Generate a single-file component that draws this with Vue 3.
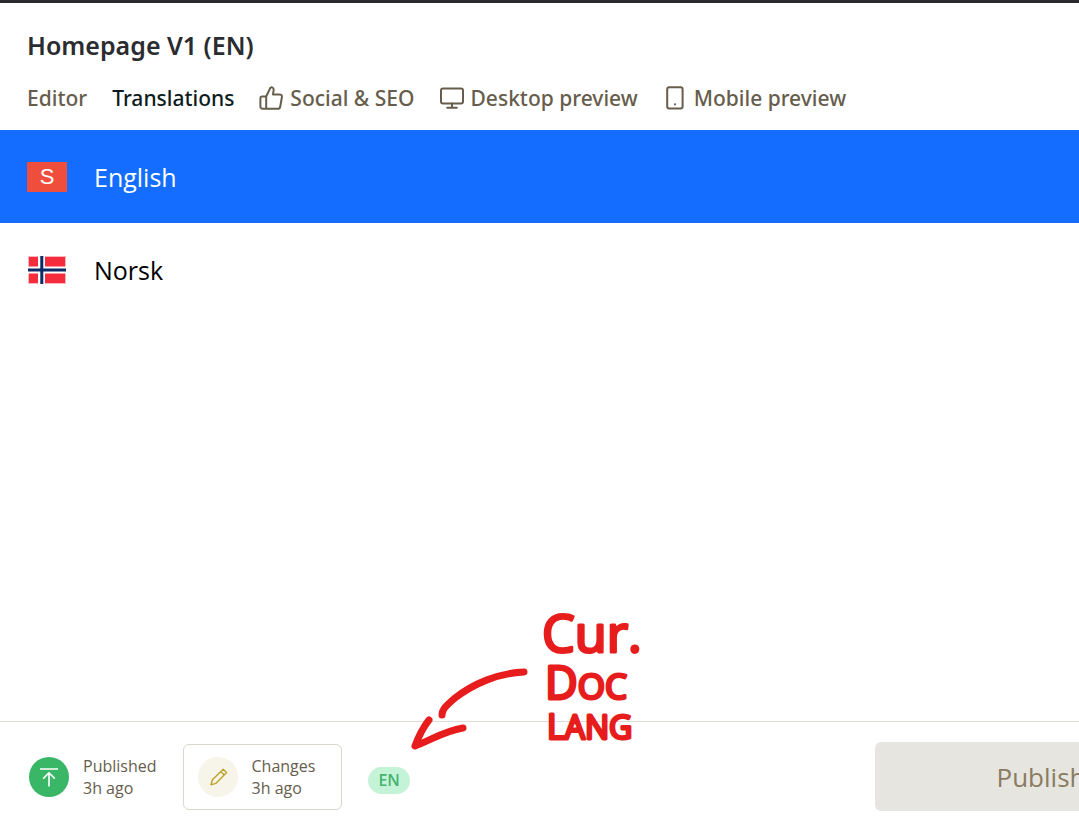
<script setup>
import { ref } from 'vue'

const activeTab = ref('translations')
const activeLanguage = ref('en')

const tabs = [
  { id: 'editor', label: 'Editor' },
  { id: 'translations', label: 'Translations' },
  { id: 'seo', label: 'Social & SEO', icon: 'thumb' },
  { id: 'desktop', label: 'Desktop preview', icon: 'desktop' },
  { id: 'mobile', label: 'Mobile preview', icon: 'mobile' },
]
</script>

<template>
  <div class="pane">
    <header class="head">
      <h1 class="title">Homepage V1 (EN)</h1>
      <nav class="tabs">
        <button
          v-for="tab in tabs"
          :key="tab.id"
          type="button"
          class="tab"
          :class="[tab.icon, { active: activeTab === tab.id }]"
          @click="activeTab = tab.id"
        >
          <svg v-if="tab.icon === 'thumb'" class="tab-icon" viewBox="0 0 24 24" aria-hidden="true">
            <path d="M7.2 10.5V22.6M2.8 10.5H7.2L10.5 3.6C10.8 1.9 12 1 13.2 1.4C14.4 1.8 14.8 3 14.6 4.4L14 8.4H20.6C22.2 8.4 23.2 9.7 22.9 11.2L21.2 20.7C21 21.9 20 22.7 18.8 22.7H3.6C2.3 22.7 1.4 21.8 1.4 20.6V12C1.4 11.2 1.9 10.5 2.8 10.5Z" />
          </svg>
          <svg v-else-if="tab.icon === 'desktop'" class="tab-icon" viewBox="0 0 24 24" aria-hidden="true">
            <rect x="1" y="2.5" width="22" height="15" rx="2" />
            <path d="M12 17.5V21.5M7.2 21.8H16.8" />
          </svg>
          <svg v-else-if="tab.icon === 'mobile'" class="tab-icon" viewBox="0 0 24 24" aria-hidden="true">
            <rect x="4.2" y="1.2" width="15.4" height="21.4" rx="2" />
            <circle class="dot" cx="12" cy="18.3" r="1.1" />
          </svg>
          <span>{{ tab.label }}</span>
        </button>
      </nav>
    </header>

    <main class="languages">
      <button type="button" class="language" :class="{ selected: activeLanguage === 'en' }" @click="activeLanguage = 'en'">
        <span class="flag brand">S</span>
        <span>English</span>
      </button>
      <button type="button" class="language" :class="{ selected: activeLanguage === 'no' }" @click="activeLanguage = 'no'">
        <svg class="flag" viewBox="0 0 40 30" aria-hidden="true">
          <rect x="1" y="1" width="38" height="28" fill="#fbb4bb" />
          <rect x="2" y="2" width="36" height="26" fill="#f52c3b" />
          <path d="M14.5 1V29M1 15H39" stroke="#fff" stroke-width="7" />
          <path d="M14.8 1V29M1 15H39" stroke="#0b2a66" stroke-width="3" />
        </svg>
        <span>Norsk</span>
      </button>
    </main>

    <footer class="foot">
      <button type="button" class="status">
        <svg class="badge" viewBox="0 0 40 40" aria-hidden="true">
          <circle cx="20" cy="20" r="20" fill="#3ab667" />
          <path d="M11 12H29M20 29.5V16M14.2 21.6L20 15.8L25.8 21.6" fill="none" stroke="#fff" stroke-width="1.6" />
        </svg>
        <span>Published<br />3h ago</span>
      </button>
      <button type="button" class="status boxed">
        <svg class="badge" viewBox="0 0 40 40" aria-hidden="true">
          <circle cx="20" cy="20" r="20" fill="#f7f5e9" />
          <path d="M13 27.8L14.4 22.8L25.2 12.2L28.6 15.6L17.8 26.4ZM22.8 14.6L26.2 18" fill="none" stroke="#c0a02c" stroke-width="1.4" stroke-linejoin="round" />
        </svg>
        <span>Changes<br />3h ago</span>
      </button>
      <span class="pill">EN</span>
      <button type="button" class="publish">Publish</button>

      <svg class="note" viewBox="0 -20 260 180" role="img" aria-label="Current document language">
        <path d="M124 72C98 73 73 84 55 98C47 105 42 109 42 115M29 120C21 130 18 138 15 146C31 140 44 131 63 128" />
        <text x="142" y="52" font-size="52">Cur.</text>
        <text x="145" y="99" font-size="45">D<tspan font-size="35">OC</tspan></text>
        <text x="147" y="139" font-size="34">L<tspan font-size="32">ANG</tspan></text>
      </svg>
    </footer>
  </div>
</template>

<style>
body {
  margin: 0;
  background: #fff;
}
</style>

<style scoped>
.pane {
  display: flex;
  flex-direction: column;
  min-height: 100vh;
  box-sizing: border-box;
  overflow: hidden;
  border-top: 3px solid #2b2a2e;
  font-family: "Open Sans", "Noto Sans", sans-serif;
  color: #000;
}

button {
  margin: 0;
  padding: 0;
  border: 0;
  background: none;
  font: inherit;
  color: inherit;
  text-align: left;
  cursor: pointer;
}

.head {
  padding: 24px 27px 14px;
}

.title {
  margin: 0;
  font-family: "Noto Sans", "Open Sans", sans-serif;
  font-size: 25px;
  font-weight: 600;
  line-height: 36px;
  color: #2a2c30;
}

.tabs {
  display: flex;
  gap: 25px;
  margin-top: 17px;
}

.tab {
  display: flex;
  align-items: center;
  gap: 7px;
  font-family: "Noto Sans", "Open Sans", sans-serif;
  font-size: 21px;
  font-weight: 500;
  line-height: 36px;
  color: #665d4c;
  white-space: nowrap;
}

.tab.active {
  color: #0d1c1e;
}

.tab-icon {
  width: 24px;
  height: 24px;
  fill: none;
  stroke: currentColor;
  stroke-width: 2;
  stroke-linejoin: round;
  stroke-linecap: round;
}

.tab-icon .dot {
  fill: currentColor;
  stroke: none;
}

.languages {
  flex: 1;
}

.language {
  display: flex;
  align-items: center;
  gap: 27px;
  width: 100%;
  height: 93px;
  padding: 0 27px;
  font-size: 25px;
}

.language.selected {
  background: #146dff;
  color: #fff;
}

.flag {
  flex: none;
  width: 40px;
  height: 30px;
}

.brand {
  background: #f04e3c;
  font-family: "Liberation Sans", Arial, sans-serif;
  font-size: 22px;
  line-height: 30px;
  text-align: center;
}

.foot {
  position: relative;
  display: flex;
  align-items: center;
  gap: 26px;
  padding: 20px 0 18px 29px;
  border-top: 1px solid #dedcd3;
}

.status {
  display: flex;
  align-items: center;
  gap: 14px;
  font-size: 16px;
  line-height: 22px;
  color: #665d4c;
}

.boxed {
  padding: 10px 26px 10px 14px;
  border: 1px solid #dbd6cf;
  border-radius: 6px;
}

.badge {
  width: 40px;
  height: 40px;
}

.pill {
  margin-top: 8px;
  padding: 0 10px;
  border-radius: 14px;
  background: #c5f3d7;
  font-size: 16px;
  font-weight: 600;
  line-height: 27px;
  color: #45b36f;
}

.publish {
  flex: none;
  width: 332px;
  height: 69px;
  margin-left: auto;
  margin-right: -128px;
  border-radius: 6px;
  background: #e6e5e0;
  font-size: 26px;
  text-align: center;
  color: #8a7b61;
}

.note {
  position: absolute;
  left: 400px;
  bottom: 69px;
  width: 260px;
  height: 180px;
  overflow: visible;
  pointer-events: none;
}

.note path {
  fill: none;
  stroke: #e71d1d;
  stroke-width: 7;
  stroke-linecap: round;
  stroke-linejoin: round;
}

.note text {
  fill: #e71d1d;
  stroke: #e71d1d;
  stroke-width: 3;
  stroke-linejoin: round;
}
</style>
